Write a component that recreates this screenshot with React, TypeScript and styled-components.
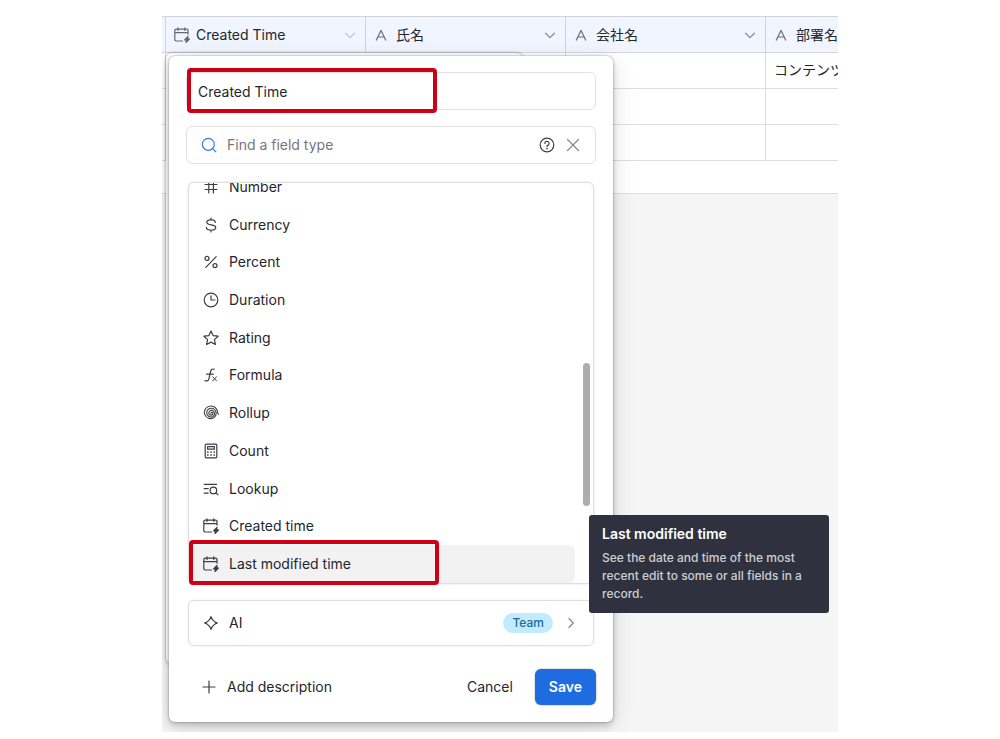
import React from 'react';
import styled, { createGlobalStyle, css } from 'styled-components';

const Global = createGlobalStyle`
  *, *::before, *::after { box-sizing: border-box; }
  body {
    margin: 0;
    background: #fff;
    color: #24262d;
    font-family: Inter, "Noto Sans CJK JP", sans-serif;
    font-size: 14px;
    line-height: 20px;
  }
  button, input { font: inherit; color: inherit; }
  button { border: 0; padding: 0; background: none; cursor: pointer; }
`;

const Page = styled.main`
  padding: 16px 162px 7px;
`;

const Board = styled.section`
  position: relative;
  overflow: hidden;
  min-height: calc(100vh - 23px);
  background: #f5f5f5;
  border-top: 1px solid #d2d4da;
`;

const Grid = styled.table`
  table-layout: fixed;
  width: 804px;
  border-collapse: separate;
  border-spacing: 0;
`;

const cell = css`
  height: 36px;
  padding: 0;
  background: #fff;
  border-bottom: 1px solid #dcdfe2;
  border-right: 1px solid #dcdfe2;
  text-align: left;
  font-weight: 400;
`;

const HeadCell = styled.th`
  ${cell}
  background: #f0f5ff;
  border-color: #d2d4da;
`;

const Cell = styled.td`
  ${cell}
  padding: 0 0 2px 8px;
  white-space: nowrap;
`;

const AddCell = styled(Cell)`
  height: 33px;
  border-right-color: #fff;
`;

const HeadInner = styled.div`
  display: flex;
  align-items: center;
  gap: 6px;
  padding: 0 7px 0 8px;
`;

const HeadLabel = styled.span`
  flex: 1;
`;

const Glyph = styled.svg<{ $tone?: string }>`
  display: block;
  flex: none;
  width: 16px;
  height: 16px;
  color: ${p => p.$tone ?? '#3c3e45'};
  fill: none;
  stroke: currentColor;
  stroke-width: 1.2;
  stroke-linecap: round;
  stroke-linejoin: round;
`;

const BackPanel = styled.div`
  position: absolute;
  left: 4px;
  top: 36px;
  width: 357px;
  height: 611px;
  background: #fff;
  border-radius: 6px;
  box-shadow: 0 0 2px rgba(0, 0, 0, 0.4), 0 1px 5px rgba(0, 0, 0, 0.15);
`;

const Editor = styled.form`
  position: absolute;
  left: 7px;
  top: 39px;
  width: 444px;
  padding: 16px 17px 17px;
  background: #fff;
  border-radius: 6px;
  box-shadow: 0 0 2px rgba(0, 0, 0, 0.4), 0 3px 6px rgba(0, 0, 0, 0.2), 0 6px 24px rgba(0, 0, 0, 0.12);
`;

const Field = styled.div`
  position: relative;
  display: flex;
  align-items: center;
  height: 38px;
  margin-bottom: 16px;
  padding: 2px 11px 0;
  border: 1px solid #e2e2e2;
  border-radius: 6px;
`;

const TextBox = styled.input`
  flex: 1;
  min-width: 0;
  padding: 0;
  border: 0;
  outline: 0;
  background: none;
  &::placeholder { color: #75777c; opacity: 1; }
`;

const SearchField = styled(Field)`
  gap: 10px;
  margin-bottom: 18px;
  padding: 0 14px;
`;

const Mark = styled.span`
  position: absolute;
  z-index: 1;
  left: 0;
  top: -5px;
  width: 250px;
  height: 45px;
  border: 4px solid #cf0015;
  border-radius: 4px;
  pointer-events: none;
`;

const ListFrame = styled.div`
  position: relative;
  margin: 0 2px 16px;
`;

const ListBox = styled.div`
  display: flex;
  align-items: flex-end;
  height: 402px;
  overflow: hidden;
  border: 1px solid #dedede;
  border-radius: 6px;
  box-shadow: 0 0 2px rgba(0, 0, 0, 0.16);
`;

const Types = styled.ul`
  flex: 1;
  display: grid;
  grid-auto-rows: 1fr;
  height: 415px;
  margin: 0;
  padding: 0 18px 0 0;
  list-style: none;
`;

const TypeRow = styled.button<{ $active?: boolean }>`
  display: flex;
  align-items: center;
  gap: 10px;
  width: 100%;
  height: 100%;
  padding-left: 14px;
  border-radius: 6px;
  background: ${p => (p.$active ? '#f2f2f2' : 'transparent')};
`;

const Thumb = styled.span`
  position: absolute;
  right: 4px;
  top: 181px;
  width: 7px;
  height: 143px;
  border-radius: 4px;
  background: #adadad;
`;

const ListMark = styled(Mark)`
  left: 1px;
  top: 358px;
`;

const AiRow = styled.button`
  display: flex;
  align-items: center;
  width: calc(100% - 4px);
  height: 46px;
  margin: 0 2px 23px;
  padding: 0 14px;
  border: 1px solid #dedede;
  border-radius: 6px;
  box-shadow: 0 0 2px rgba(0, 0, 0, 0.1);
`;

const AiLabel = styled.span`
  flex: 1;
  margin-left: 10px;
  text-align: left;
`;

const Pill = styled.span`
  margin-right: 10px;
  padding: 0 9px;
  border-radius: 10px;
  background: #c3ebff;
  color: #21699e;
  font-size: 12px;
  font-weight: 500;
`;

const Footer = styled.footer`
  display: flex;
  align-items: center;
`;

const AddButton = styled.button`
  display: flex;
  align-items: center;
  gap: 10px;
  margin: 0 auto 0 15px;
`;

const SaveButton = styled.button`
  height: 36px;
  margin: 0 0 0 22px;
  padding: 0 14px;
  border-radius: 6px;
  background: #1f6be0;
  color: #fff;
  font-weight: 600;
  box-shadow: 0 0 2px rgba(0, 0, 0, 0.4);
`;

const Tip = styled.aside`
  position: absolute;
  left: 427px;
  top: 498px;
  width: 240px;
  padding: 10px 13px;
  border-radius: 3px;
  background: #2f323e;
  color: #cdced2;
  font-size: 12px;
  font-weight: 500;
  line-height: 18px;
`;

const TipTitle = styled.strong`
  display: block;
  margin-bottom: 6px;
  color: #fff;
  font-size: 14px;
  font-weight: 600;
`;

const TipText = styled.p`
  margin: 0;
`;

const CalendarBolt = ({ tone }: { tone?: string }) => (
  <Glyph $tone={tone} viewBox="0 0 16 16" aria-hidden>
    <path d="M14 7.2V3.6a1.4 1.4 0 0 0-1.4-1.4H2.2A1.4 1.4 0 0 0 .8 3.600v9A1.4 1.4 0 0 0 2.200 14h6.400M.8 5.600H14M4 .8v2.600M10.800.8v2.600" />
    <path d="M14 9.300l-3.400 3.500 1.900.5-.5 2.200 3.400-3.500-1.900-.5z" fill="currentColor" />
  </Glyph>
);

const LetterA = () => (
  <Glyph $tone="#6a6d78" viewBox="0 0 16 16" aria-hidden>
    <path d="M2.3 13L7 3.4 11.7 13M3.9 10h6.2" />
  </Glyph>
);

const Chevron = ({ faint, right }: { faint?: boolean; right?: boolean }) => (
  <Glyph $tone={faint ? '#c3c7d0' : '#858993'} viewBox="0 0 16 16" aria-hidden>
    <path d={right ? 'M6 3.5L10.3 8 6 12.5' : 'M3.5 6.2L8 10.6l4.5-4.4'} />
  </Glyph>
);

const typeIcons: Record<string, React.ReactNode> = {
  Number: <path d="M2 5.500h12M2 10.500h12M5.800 2v12M10.400 2v12" />,
  Currency: (
    <path d="M12.3 5.4c0-1.7-1.5-2.6-3.3-2.6H7.2C5.2 2.8 3.8 3.8 3.8 5.3c0 3.600 8.900 1.700 8.900 5.200 0 1.600-1.500 2.500-3.500 2.500H7c-2 0-3.600-1-3.600-2.700M8 1v1.800M8 13v2" />
  ),
  Percent: (
    <>
      <circle cx="4" cy="4.4" r="2" />
      <circle cx="12" cy="11.6" r="2" />
      <path d="M13.2 2.600L2.800 13.400" />
    </>
  ),
  Duration: (
    <>
      <circle cx="8" cy="8" r="6.8" />
      <path d="M8 3.9V8h4" />
    </>
  ),
  Rating: (
    <path d="M8 1.1l2.1 4.5 5 .6-3.7 3.4 1 4.9L8 12.1l-4.4 2.4 1-4.900L.9 6.200l5-.6z" />
  ),
  Formula: (
    <>
      <path d="M11.2 2.3c-2.3-.9-3.2.5-3.6 2.2L5.9 11.8C5.4 13.7 4 14.5 2 13.6M3.6 7.2h6.6" />
      <path d="M9.7 9.8l3.8 4M13.5 9.8l-3.8 4" strokeWidth="1" />
    </>
  ),
  Rollup: (
    <path
      strokeWidth="1.1"
      d="M8 8.300a.8.8 0 0 1 1.300-.8c.9.700.5 2.400-1 2.600C6.700 10.300 5.500 8.900 5.900 7.300c.5-1.900 3-2.600 4.500-1.200 1.800 1.600 1.400 4.600-1 5.600-2.700 1.100-5.600-.9-5.700-3.900-.1-3.300 3.300-5.500 6.300-4.200 3.400 1.400 4.200 5.900 1.500 8.500-3.100 2.900-8.400 1.500-9.800-2.700C.3 5 3.700.9 8.100 1c3.900.1 6.500 3.100 6.500 6.600 0 .9.300 1.300.8 1.600"
    />
  ),
  Count: (
    <>
      <rect x="2.2" y="1.2" width="11.6" height="13.6" rx="1" />
      <path d="M4.6 3.600h6.800v2.600H4.600z" />
      <path d="M4.8 9h.1M8 9h.1M11.2 9h.1M4.8 12h.1M8 12h.1M11.2 12h.1" strokeWidth="1.7" />
    </>
  ),
  Lookup: (
    <>
      <path d="M1.2 3.3h12.400M1.200 7.700h4M1.200 12.200h4" />
      <circle cx="10.4" cy="9.4" r="3.3" />
      <path d="M12.8 11.8l2.200 2.100" />
    </>
  ),
};

const types = [
  'Number', 'Currency', 'Percent', 'Duration', 'Rating', 'Formula',
  'Rollup', 'Count', 'Lookup', 'Created time', 'Last modified time',
];

const bodyRows = ['コンテンツ', '', ''];

export default function App() {
  return (
    <Page>
      <Global />
      <Board>
        <Grid>
          <colgroup>
            <col style={{ width: 4 }} />
            <col span={4} />
          </colgroup>
          <thead>
            <tr>
              <HeadCell />
              <HeadCell>
                <HeadInner>
                  <CalendarBolt tone="#646873" />
                  <HeadLabel>Created Time</HeadLabel>
                  <Chevron faint />
                </HeadInner>
              </HeadCell>
              {['氏名', '会社名', '部署名'].map(name => (
                <HeadCell key={name}>
                  <HeadInner>
                    <LetterA />
                    <HeadLabel>{name}</HeadLabel>
                    <Chevron />
                  </HeadInner>
                </HeadCell>
              ))}
            </tr>
          </thead>
          <tbody>
            {bodyRows.map((value, i) => (
              <tr key={i}>
                <Cell />
                <Cell />
                <Cell />
                <Cell />
                <Cell>{value}</Cell>
              </tr>
            ))}
            <tr>
              <AddCell colSpan={5} />
            </tr>
          </tbody>
        </Grid>

        <BackPanel />

        <Editor onSubmit={e => e.preventDefault()}>
          <Field>
            <TextBox aria-label="Field name" defaultValue="Created Time" />
            <Mark />
          </Field>
          <SearchField>
            <Glyph $tone="#2f7cf0" viewBox="0 0 16 16" aria-hidden>
              <circle cx="7.3" cy="7.3" r="6" />
              <path d="M11.7 11.7l3.2 3.2" />
            </Glyph>
            <TextBox aria-label="Find a field type" placeholder="Find a field type" />
            <button type="button" aria-label="Help">
              <Glyph viewBox="0 0 16 16" aria-hidden>
                <circle cx="8" cy="8" r="6.8" />
                <path d="M5.900 6.400a2.100 2.100 0 1 1 3.300 1.700C8.400 8.500 8 8.800 8 9.400" />
                <path d="M8 11.600v.1" strokeWidth="1.6" />
              </Glyph>
            </button>
            <button type="button" aria-label="Clear">
              <Glyph $tone="#85878c" viewBox="0 0 16 16" aria-hidden>
                <path d="M2.5 2.5l11 11M13.5 2.5l-11 11" />
              </Glyph>
            </button>
          </SearchField>

          <ListFrame>
            <ListBox>
              <Types>
                {types.map(name => (
                  <li key={name}>
                    <TypeRow type="button" $active={name === 'Last modified time'}>
                      {typeIcons[name] ? (
                        <Glyph viewBox="0 0 16 16" aria-hidden>{typeIcons[name]}</Glyph>
                      ) : (
                        <CalendarBolt />
                      )}
                      {name}
                    </TypeRow>
                  </li>
                ))}
              </Types>
            </ListBox>
            <Thumb />
            <ListMark />
          </ListFrame>

          <AiRow type="button">
            <Glyph viewBox="0 0 16 16" aria-hidden>
              <path d="M8 2.500Q9 7 13.500 8 9 9 8 13.500 7 9 2.500 8 7 7 8 2.500z" stroke="none" />
              <path d="M8 2.6L10.400 5.600 13.400 8 10.400 10.400 8 13.400 5.600 10.400 2.600 8 5.600 5.600z" />
              <path d="M8 2.400v.1M13.600 8h.1M8 13.600v.1M2.300 8h.1" strokeWidth="2.1" />
            </Glyph>
            <AiLabel>AI</AiLabel>
            <Pill>Team</Pill>
            <Chevron right />
          </AiRow>

          <Footer>
            <AddButton type="button">
              <Glyph viewBox="0 0 16 16" aria-hidden>
                <path d="M8 2v12M2 8h12" />
              </Glyph>
              Add description
            </AddButton>
            <button type="button">Cancel</button>
            <SaveButton type="submit">Save</SaveButton>
          </Footer>
        </Editor>

        <Tip role="tooltip">
          <TipTitle>Last modified time</TipTitle>
          <TipText>See the date and time of the most recent edit to some or all fields in a record.</TipText>
        </Tip>
      </Board>
    </Page>
  );
}
